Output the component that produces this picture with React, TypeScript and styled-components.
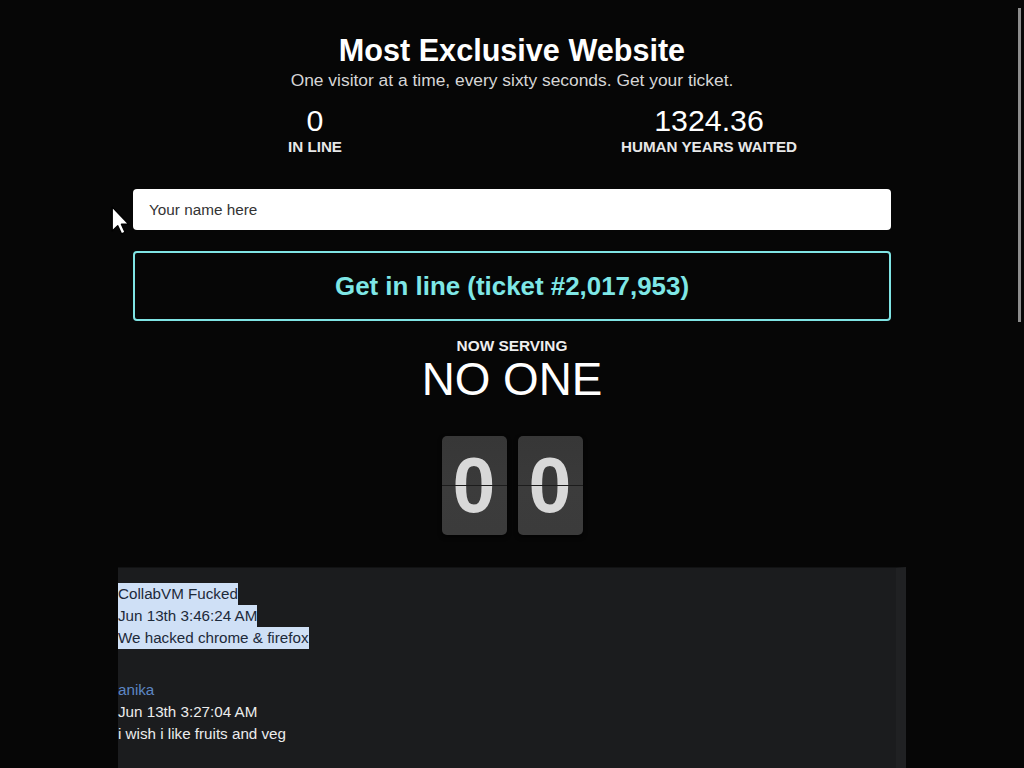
import styled, { createGlobalStyle } from "styled-components";

const GlobalStyle = createGlobalStyle`
  html, body {
    margin: 0;
    padding: 0;
    background-color: #060606;
    color: #ffffff;
    font-family: "Liberation Sans", Arial, sans-serif;
  }
`;

const Container = styled.div`
  width: 788px;
  margin: 0 auto;
  padding-top: 32px;
  text-align: center;
`;

const Title = styled.h1`
  margin: 0;
  font-size: 30.6px;
  line-height: 36px;
  font-weight: bold;
  color: #ffffff;
`;

const Subtitle = styled.p`
  margin: 2px 0 0;
  font-size: 17.4px;
  line-height: 20px;
  color: #d6d6d6;
`;

const Stats = styled.div`
  display: grid;
  grid-template-columns: 1fr 1fr;
  margin-top: 15px;
`;

const Stat = styled.div`
  display: flex;
  flex-direction: column;
  align-items: center;
`;

const StatValue = styled.div`
  font-size: 30.3px;
  line-height: 32px;
  color: #ffffff;
`;

const StatLabel = styled.div`
  font-size: 15.2px;
  line-height: 18px;
  font-weight: bold;
  color: #e8e8e8;
  margin-top: 1px;
`;

const Form = styled.div`
  display: flex;
  flex-direction: column;
  gap: 21px;
  padding: 0 15px;
  margin-top: 33px;
  position: relative;
`;

const NameInput = styled.input`
  box-sizing: border-box;
  height: 41px;
  width: 100%;
  border: none;
  border-radius: 4px;
  padding: 0 16px;
  background: #ffffff;
  font-family: "Liberation Sans", Arial, sans-serif;
  font-size: 15.3px;
  color: #333333;
  outline: none;
  &::placeholder {
    color: #333333;
  }
`;

const LineButton = styled.button`
  box-sizing: border-box;
  height: 70px;
  width: 100%;
  background: transparent;
  border: 2px solid #7fe3e3;
  border-radius: 4px;
  color: #7ee7e6;
  font-family: "Liberation Sans", Arial, sans-serif;
  font-size: 25.9px;
  font-weight: bold;
  cursor: pointer;
`;

const Cursor = styled.svg`
  position: absolute;
  left: -7px;
  top: 17px;
  width: 19px;
  height: 29px;
`;

const ServingLabel = styled.div`
  margin-top: 16px;
  font-size: 15.4px;
  line-height: 18px;
  font-weight: bold;
  color: #eeeeee;
`;

const ServingName = styled.div`
  font-size: 45.8px;
  line-height: 50px;
  color: #ffffff;
`;

const Clock = styled.div`
  display: flex;
  justify-content: center;
  gap: 11px;
  margin-top: 31px;
`;

const FlipCard = styled.div`
  position: relative;
  width: 65px;
  height: 99px;
  border-radius: 5px;
  background: linear-gradient(#373737 0%, #3a3a3a 49%, #3c3c3c 51%, #3b3b3b 100%);
  box-shadow: 0 2px 4px rgba(0, 0, 0, 0.6);
  display: flex;
  align-items: center;
  justify-content: center;
  font-size: 77px;
  font-weight: bold;
  color: #d8d8d8;
  line-height: 1;
  &::after {
    content: "";
    position: absolute;
    left: 0;
    right: 0;
    top: 49px;
    height: 1px;
    background: #1c1c1c;
  }
`;

const Chat = styled.div`
  margin-top: 32px;
  background: #1b1c1e;
  border-right: 10px solid #202123;
  border-top: 1px solid #111213;
  padding: 15px 0 40px;
  text-align: left;
  min-height: 400px;
`;

const Message = styled.div`
  display: flex;
  flex-direction: column;
  align-items: flex-start;
  font-size: 15.2px;
  line-height: 22px;
  color: #ececec;
  margin-bottom: 30px;
`;

const Author = styled.span<{ selected?: boolean }>`
  color: ${(p) => (p.selected ? "#1d2a3a" : "#5c86c4")};
  background: ${(p) => (p.selected ? "#cfe0f6" : "transparent")};
`;

const Line = styled.span<{ selected?: boolean }>`
  color: ${(p) => (p.selected ? "#1d2a3a" : "#ececec")};
  background: ${(p) => (p.selected ? "#cfe0f6" : "transparent")};
`;

const ScrollThumb = styled.div`
  position: fixed;
  right: 3px;
  top: 8px;
  width: 3px;
  height: 314px;
  background: #8c8c8c;
`;

interface ChatMessage {
  author: string;
  time: string;
  text: string;
  selected?: boolean;
}

const messages: ChatMessage[] = [
  {
    author: "CollabVM Fucked",
    time: "Jun 13th 3:46:24 AM",
    text: "We hacked chrome & firefox",
    selected: true,
  },
  {
    author: "anika",
    time: "Jun 13th 3:27:04 AM",
    text: "i wish i like fruits and veg",
  },
];

function App() {
  return (
    <>
      <GlobalStyle />
      <Container>
        <Title>Most Exclusive Website</Title>
        <Subtitle>One visitor at a time, every sixty seconds. Get your ticket.</Subtitle>
        <Stats>
          <Stat>
            <StatValue>0</StatValue>
            <StatLabel>IN LINE</StatLabel>
          </Stat>
          <Stat>
            <StatValue>1324.36</StatValue>
            <StatLabel>HUMAN YEARS WAITED</StatLabel>
          </Stat>
        </Stats>
        <Form>
          <NameInput placeholder="Your name here" />
          <LineButton>Get in line (ticket #2,017,953)</LineButton>
          <Cursor viewBox="0 0 13 20">
            <path
              d="M0.8 0.8 L0.8 17.2 L4.6 13.6 L7.2 19.2 L9.6 18.1 L7.1 12.6 L12.2 12.6 Z"
              fill="#ffffff"
              stroke="#000000"
              strokeWidth="0.9"
              strokeLinejoin="round"
            />
          </Cursor>
        </Form>
        <ServingLabel>NOW SERVING</ServingLabel>
        <ServingName>NO ONE</ServingName>
        <Clock>
          <FlipCard>0</FlipCard>
          <FlipCard>0</FlipCard>
        </Clock>
        <Chat>
          {messages.map((m) => (
            <Message key={m.time}>
              <Author selected={m.selected}>{m.author}</Author>
              <Line selected={m.selected}>{m.time}</Line>
              <Line selected={m.selected}>{m.text}</Line>
            </Message>
          ))}
        </Chat>
      </Container>
      <ScrollThumb />
    </>
  );
}

export default App;
